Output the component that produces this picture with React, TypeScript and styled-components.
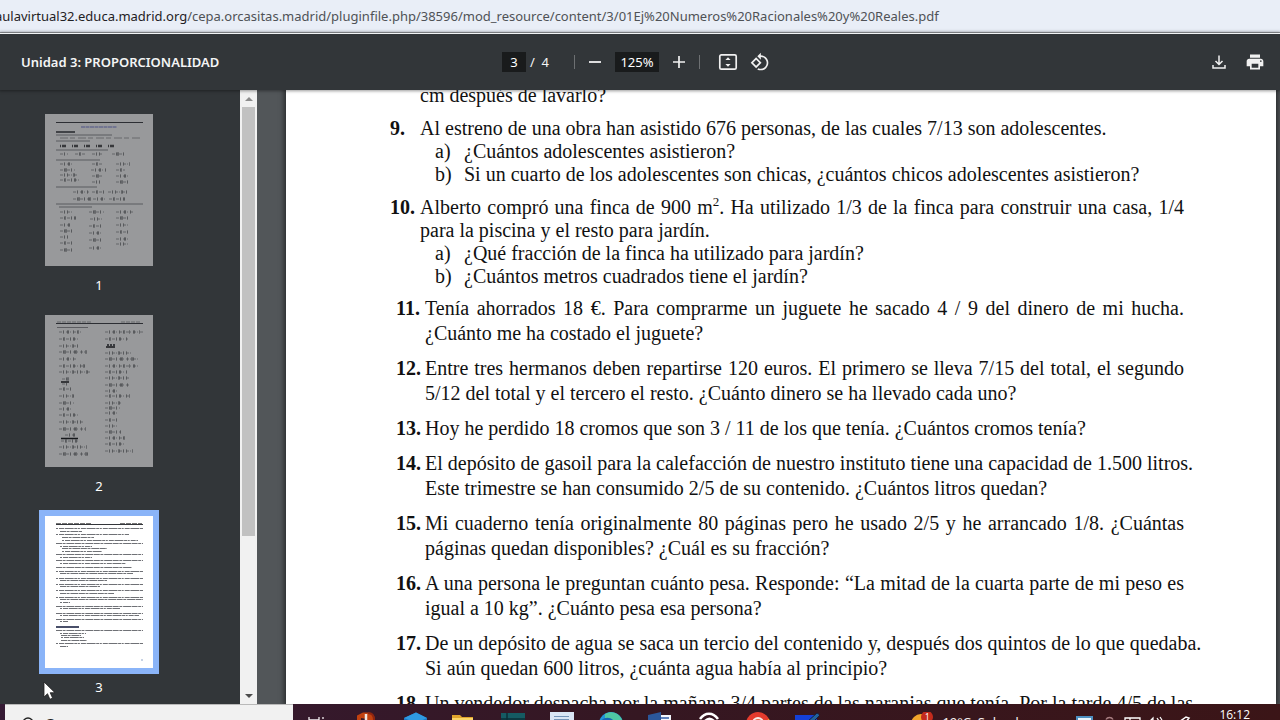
import React from "react";
import styled, { createGlobalStyle } from "styled-components";

const GlobalStyle = createGlobalStyle`
  *, *::before, *::after { box-sizing: border-box; }
  html, body, #root { height: 100%; margin: 0; }
  body {
    font-family: "Noto Sans", "Open Sans", sans-serif;
    overflow: hidden;
  }
  button, input { font: inherit; color: inherit; }
`;

const Screen = styled.div`
  display: grid;
  grid-template-rows: auto auto minmax(0, 1fr) 16px;
  height: 100vh;
  overflow: hidden;
`;

/* ---------- address bar ---------- */

const AddressBar = styled.div`
  display: flex;
  align-items: center;
  height: 33px;
  background: #e9eef7;
  border-bottom: 1px solid #a3a7ab;
  overflow: hidden;
`;

const Url = styled.div`
  margin-left: -5px;
  font-size: 13px;
  line-height: 20px;
  white-space: nowrap;
  color: #4f5256;
`;

const Host = styled.span`
  color: #1f2124;
`;

/* ---------- viewer toolbar ---------- */

const Toolbar = styled.header`
  position: relative;
  z-index: 2;
  display: grid;
  grid-template-columns: 1fr auto 1fr;
  align-items: center;
  height: 57px;
  padding: 0 15px 0 21px;
  background: #323639;
  color: #f4f5f5;
  font-size: 13px;
  border-top: 1px solid #f2f4f6;
  box-shadow: 0 0 3px 1px rgba(0, 0, 0, 0.4);
`;

const Title = styled.h1`
  margin: 0;
  font-size: 13px;
  font-weight: 600;
  white-space: nowrap;
`;

const Controls = styled.div`
  display: flex;
  align-items: center;
  padding-right: 8px;
`;

const ToolInput = styled.input<{ $width: number }>`
  width: ${(p) => p.$width}px;
  height: 20px;
  padding: 0;
  border: 0;
  background: #191b1c;
  color: #fff;
  text-align: center;
`;

const PageTotal = styled.span`
  width: 48px;
  padding-left: 4px;
  white-space: pre;
`;

const Divider = styled.span`
  width: 1px;
  height: 14px;
  background: #6d7072;
`;

const IconButton = styled.button`
  display: grid;
  place-items: center;
  width: 32px;
  height: 32px;
  padding: 0;
  border: 0;
  background: none;
  color: #f1f1f1;
`;

const ZoomGroup = styled.div`
  display: flex;
  align-items: center;
  gap: 4px;
  padding: 0 4px;
`;

const FitGroup = styled.div`
  display: flex;
  padding-left: 12px;
`;

const Actions = styled.div`
  display: flex;
  justify-content: flex-end;
  gap: 16px;

  ${IconButton} { width: 20px; }
`;

/* ---------- main area ---------- */

const Main = styled.main`
  display: grid;
  grid-template-columns: 240px 17px minmax(0, 1fr);
  min-height: 0;
  background: #525659;
`;

const Sidebar = styled.nav`
  display: flex;
  flex-direction: column;
  align-items: center;
  gap: 22px;
  padding: 24px 42px 0 0;
  overflow: hidden;
  background: #323639;
`;

const ThumbItem = styled.button`
  display: flex;
  flex-direction: column;
  align-items: center;
  gap: 11px;
  flex: none;
  padding: 0;
  border: 0;
  background: none;
  color: #fff;
  font-size: 13px;
  line-height: 16px;
`;

const ThumbPage = styled.span<{ $active?: boolean }>`
  display: block;
  width: 108px;
  height: 152px;
  background: ${(p) => (p.$active ? "#fff" : "#98999b")};
  box-shadow: ${(p) => (p.$active ? "0 0 0 6px #8ab4f8" : "none")};

  svg { display: block; }
`;

const Scrollbar = styled.div`
  display: flex;
  flex-direction: column;
  align-items: center;
  background: #f1f1f1;
`;

const ScrollArrow = styled.span`
  display: grid;
  place-items: center;
  flex: none;
  width: 17px;
  height: 17px;
`;

const ScrollTrack = styled.div`
  flex: 1;
  width: 13px;
`;

const ScrollThumb = styled.div`
  height: 74%;
  background: #c1c1c1;
`;

const Viewer = styled.section`
  padding: 0 4px 0 29px;
  overflow: hidden;
  min-height: 0;
`;

const Paper = styled.article`
  height: 100%;
  padding: 0 92px 0 104px;
  background: #fff;
  box-shadow: 0 0 5px 2px rgba(0, 0, 0, 0.5);
  color: #111;
  font-family: "Liberation Serif", "Times New Roman", serif;
  font-size: 20px;
  overflow: hidden;
`;

const Sheet = styled.div`
  margin-top: -6px;
`;

const Exercises = styled.div<{ $loose?: boolean }>`
  display: grid;
  gap: 10px;
  margin-top: ${(p) => (p.$loose ? 8 : 0)}px;
  padding-left: ${(p) => (p.$loose ? 6 : 0)}px;
  line-height: ${(p) => (p.$loose ? 25 : 23)}px;
`;

const Exercise = styled.div<{ $loose?: boolean }>`
  display: grid;
  grid-template-columns: ${(p) => (p.$loose ? 29 : 30)}px minmax(0, 1fr);
`;

const Num = styled.b`
  white-space: nowrap;
`;

const Statement = styled.p`
  margin: 0;
`;

/* The document is already typeset: every line but the last fills the measure. */
const Line = styled.span`
  display: block;
  white-space: nowrap;

  &:not(:last-child) { text-align-last: justify; }

  sup {
    font-size: 13px;
    line-height: 0;
  }
`;

const Question = styled.div`
  display: grid;
  grid-template-columns: 29px minmax(0, 1fr);
  padding-left: 15px;
  white-space: nowrap;
`;

/* ---------- task bar ---------- */

const Taskbar = styled.footer`
  position: relative;
  z-index: 3;
  display: flex;
  align-items: flex-start;
  height: 16px;
  padding-left: 5px;
  overflow: hidden;
  background: linear-gradient(90deg, #351a34, #351722 50%, #3b1517);
  color: #f5eeee;
`;

const SearchBox = styled.label`
  display: flex;
  align-items: center;
  flex: none;
  gap: 9px;
  width: 288px;
  height: 40px;
  padding-left: 16px;
  border-top: 1px solid #b9b9b9;
  background: #f1f1f1;
  color: #222;
`;

const SearchInput = styled.input`
  width: 200px;
  height: 24px;
  padding: 0;
  border: 0;
  background: none;
  font-size: 16px;
`;

const Apps = styled.div`
  display: flex;
  gap: 1px;
`;

const AppButton = styled.button`
  display: grid;
  place-items: center;
  width: 48px;
  height: 40px;
  padding: 0;
  border: 0;
  background: none;
`;

const Tray = styled.div`
  display: flex;
  align-items: center;
  height: 40px;
  margin-left: auto;
  padding-right: 30px;
`;

const Weather = styled.div`
  display: flex;
  align-items: center;
  gap: 8px;
  width: 163px;
  font-size: 13px;
  line-height: 20px;
  white-space: pre;
`;

const Forecast = styled.span`
  padding-bottom: 4px;
`;

const TrayIcons = styled.div`
  display: flex;
  width: 146px;
`;

const Clock = styled.time`
  align-self: flex-start;
  padding-top: 2px;
  font-family: "Open Sans", "Noto Sans", sans-serif;
  font-size: 12px;
  line-height: 17px;
  color: #fff;
`;

const Pointer = styled.svg`
  position: fixed;
  left: 43px;
  bottom: 19px;
  z-index: 4;
`;

/* ---------- thumbnails ---------- */

type Stroke = [x: number, y: number, width: number];

const rulesOne: Stroke[] = [
  [11, 21, 56], [11, 27, 34], [11, 36, 52], [11, 46, 44],
  [11, 73, 41], [11, 90, 87], [14, 93, 33],
];
const formulasOne: Stroke[] = [
  [15, 40, 8], [30, 40, 10], [47, 40, 11], [67, 40, 14],
  [15, 50, 12], [47, 50, 10], [71, 50, 14], [15, 56, 15], [46, 56, 15], [71, 56, 9],
  [15, 61, 17], [47, 62, 11], [71, 62, 12], [15, 66, 20], [47, 68, 8], [71, 68, 12],
  [28, 78, 16], [47, 78, 14], [63, 78, 20], [28, 85, 18], [48, 85, 14], [64, 85, 16],
  [15, 98, 12], [44, 98, 15], [71, 98, 18], [15, 104, 16], [45, 105, 12], [71, 104, 12],
  [15, 111, 11], [44, 112, 12], [71, 111, 13], [15, 117, 13], [44, 119, 13],
  [71, 118, 12], [15, 123, 8], [44, 126, 14], [71, 125, 12], [15, 129, 14],
  [71, 130, 12], [15, 136, 12], [44, 134, 12],
];
const formulasTwo: Stroke[] = [
  [14, 17, 22], [14, 24, 20], [14, 31, 20], [14, 37, 28], [14, 44, 17], [14, 51, 26],
  [14, 57, 32], [17, 64, 7], [17, 69, 7], [14, 74, 13], [14, 81, 15], [14, 88, 15],
  [14, 94, 13], [14, 100, 20], [14, 107, 24], [14, 114, 27], [20, 120, 10],
  [16, 126, 17], [14, 132, 28], [14, 139, 29],
  [60, 17, 38], [60, 24, 23], [60, 38, 26], [60, 44, 33], [60, 51, 33], [60, 57, 22],
  [60, 63, 25], [60, 70, 25], [60, 76, 14], [60, 81, 25], [60, 88, 16], [60, 93, 15],
  [60, 98, 14], [60, 105, 14], [60, 111, 13], [60, 117, 16], [60, 123, 21],
  [60, 129, 21], [60, 136, 28],
];
const textThree: Stroke[] = [
  [11, 12, 87], [15, 15, 22], [11, 18, 73], [17, 21, 32], [17, 24, 76],
  [11, 27, 87], [15, 30, 32], [17, 32, 45], [17, 35, 40], [11, 38, 87], [15, 41, 32],
  [11, 44, 87], [15, 47, 66], [11, 51, 76], [11, 55, 87], [15, 57, 73], [11, 62, 87],
  [15, 64, 47], [11, 68, 87], [15, 70, 40], [11, 74, 87], [15, 77, 54], [11, 81, 87],
  [15, 83, 83], [15, 86, 10], [11, 90, 87], [15, 92, 60], [11, 97, 87], [15, 99, 79],
  [11, 103, 87], [15, 105, 8], [11, 114, 87], [15, 117, 26], [16, 119, 20],
  [16, 121, 23], [16, 124, 26], [11, 127, 87], [15, 130, 8],
];

const dashes = ["1 3 2 4", "2 5 1 2", "1 2 1 5 2 3", "3 4 1 3"];

const Formulas = ({ rows }: { rows: Stroke[] }) => (
  <g stroke="#34363a">
    {rows.map(([x, y, w], i) => (
      <g key={`${x}-${y}`}>
        <path d={`M${x} ${y}h${w}`} strokeWidth="1" strokeDasharray="3 1 1 2" opacity=".5" />
        <path
          d={`M${x + 4} ${y}h${w - 4}`}
          strokeWidth="3.400"
          strokeDasharray={dashes[i % dashes.length]}
          opacity=".5"
        />
      </g>
    ))}
  </g>
);

const ThumbOne = () => (
  <svg width="108" height="152" viewBox="0 0 108 152" aria-hidden="true">
    <path d="M11 8.500h87" stroke="#2c2e33" />
    <g stroke="#4a4c50" strokeWidth=".8">
      {rulesOne.map(([x, y, w]) => <path key={y} d={`M${x} ${y}h${w}`} />)}
    </g>
    <path d="M11 18h19" stroke="#25272b" strokeWidth="1.500" />
    <path d="M36 13h36" stroke="#4d5385" strokeWidth="1.200" strokeDasharray="4 .5" />
    <path d="M15 24h80" stroke="#55575a" strokeDasharray="8 2 5 3" opacity=".7" />
    <path d="M15 32h56" stroke="#1f2124" strokeWidth="2.500" strokeDasharray="1 1 4 6" opacity=".8" />
    <Formulas rows={formulasOne} />
  </svg>
);

const ThumbTwo = () => (
  <svg width="108" height="152" viewBox="0 0 108 152" aria-hidden="true">
    <path d="M11 8.500h87" stroke="#2c2e33" />
    <path d="M12 7h34M76 7h20" stroke="#393b3f" strokeDasharray="4 1" opacity=".5" />
    <path d="M12 12.500h31" stroke="#4c4e52" strokeWidth=".8" />
    <path d="M16 67h8M16 123.500h17M61 32h9" stroke="#17191c" strokeWidth="1.300" />
    <path d="M62 30h8" stroke="#393b3f" strokeWidth="2" strokeDasharray="2 1" />
    <Formulas rows={formulasTwo} />
  </svg>
);

const ThumbThree = () => (
  <svg width="108" height="152" viewBox="0 0 108 152" aria-hidden="true">
    <path d="M11 8.500h87" stroke="#33353a" />
    <path d="M11 7.500h36M75 7.500h22" stroke="#777" strokeDasharray="5 1" />
    <g stroke="#4c4e54" strokeWidth="1" opacity=".8">
      {textThree.map(([x, y, w], i) => (
        <path
          key={y}
          d={`M${x} ${y + 0.5}h${w}`}
          strokeDasharray={i % 2 ? "6 .6 3 .8 8 .5" : "2 1 5 .7 9 .6 3 .6"}
        />
      ))}
    </g>
    <path d="M11 111h23" stroke="#1c2344" strokeWidth="1.600" />
    <path d="M96 144h2" stroke="#8fa5c8" />
  </svg>
);

const thumbnails = [ThumbOne, ThumbTwo, ThumbThree];

/* ---------- document text ---------- */

type Item = { n: string; lines: React.ReactNode[]; questions?: string[] };

const tightItems: Item[] = [
  { n: "", lines: ["cm después de lavarlo?"] },
  {
    n: "9.",
    lines: ["Al estreno de una obra han asistido 676 personas, de las cuales 7/13 son adolescentes."],
    questions: [
      "¿Cuántos adolescentes asistieron?",
      "Si un cuarto de los adolescentes son chicas, ¿cuántos chicos adolescentes asistieron?",
    ],
  },
  {
    n: "10.",
    lines: [
      <>
        Alberto compró una finca de 900 m<sup>2</sup>. Ha utilizado 1/3 de la finca para
        construir una casa, 1/4
      </>,
      "para la piscina y el resto para jardín.",
    ],
    questions: [
      "¿Qué fracción de la finca ha utilizado para jardín?",
      "¿Cuántos metros cuadrados tiene el jardín?",
    ],
  },
];

const looseItems: Item[] = [
  {
    n: "11.",
    lines: [
      "Tenía ahorrados 18 €. Para comprarme un juguete he sacado 4 / 9 del dinero de mi hucha.",
      "¿Cuánto me ha costado el juguete?",
    ],
  },
  {
    n: "12.",
    lines: [
      "Entre tres hermanos deben repartirse 120 euros. El primero se lleva 7/15 del total, el segundo",
      "5/12 del total y el tercero el resto. ¿Cuánto dinero se ha llevado cada uno?",
    ],
  },
  {
    n: "13.",
    lines: ["Hoy he perdido 18 cromos que son 3 / 11 de los que tenía. ¿Cuántos cromos tenía?"],
  },
  {
    n: "14.",
    lines: [
      "El depósito de gasoil para la calefacción de nuestro instituto tiene una capacidad de 1.500 litros.",
      "Este trimestre se han consumido 2/5 de su contenido. ¿Cuántos litros quedan?",
    ],
  },
  {
    n: "15.",
    lines: [
      "Mi cuaderno tenía originalmente 80 páginas pero he usado 2/5 y he arrancado 1/8. ¿Cuántas",
      "páginas quedan disponibles? ¿Cuál es su fracción?",
    ],
  },
  {
    n: "16.",
    lines: [
      "A una persona le preguntan cuánto pesa. Responde: “La mitad de la cuarta parte de mi peso es",
      "igual a 10 kg”. ¿Cuánto pesa esa persona?",
    ],
  },
  {
    n: "17.",
    lines: [
      "De un depósito de agua se saca un tercio del contenido y, después dos quintos de lo que quedaba.",
      "Si aún quedan 600 litros, ¿cuánta agua había al principio?",
    ],
  },
  {
    n: "18.",
    lines: ["Un vendedor despacha por la mañana 3/4 partes de las naranjas que tenía. Por la tarde 4/5 de las"],
  },
];

const ExerciseList = ({ items, loose }: { items: Item[]; loose?: boolean }) => (
  <Exercises $loose={loose}>
    {items.map((item) => (
      <Exercise key={item.n} $loose={loose}>
        <Num>{item.n}</Num>
        <div>
          <Statement>
            {item.lines.map((line, i) => <Line key={i}>{line}</Line>)}
          </Statement>
          {item.questions?.map((q, i) => (
            <Question key={q}>
              <span>{"ab"[i]})</span>
              <span>{q}</span>
            </Question>
          ))}
        </div>
      </Exercise>
    ))}
  </Exercises>
);

/* ---------- task bar icons ---------- */

const apps: { name: string; art: React.ReactNode }[] = [
  { name: "Vista de tareas", art: <path d="M4 5v3h10V5M18 5v2M18 8v3" fill="none" stroke="#f4eef2" strokeWidth="1.300" /> },
  {
    name: "Office",
    art: (
      <>
        <path d="M3 3.500 9 .5h4c5 0 8 3 8 8V20h-8V7L7 6v5L3 9z" fill="#c2410f" />
        <path d="M12 2v16" stroke="#f3e6df" strokeWidth="2.500" />
        <path d="M14 1c4 0 6 3 6 7" fill="none" stroke="#8f2510" strokeWidth="2" />
      </>
    ),
  },
  {
    name: "Paquetes",
    art: (
      <>
        <path d="M13 .5 24 6v12l-11 6L1 18V6z" fill="#1b78c4" />
        <path d="M13 .5 24 6l-11 5L1 6z" fill="#2f9ae2" />
      </>
    ),
  },
  {
    name: "Explorador de archivos",
    art: (
      <>
        <path d="M0 3h8l2 2h11v16H0z" fill="#e0a32c" />
        <path d="M0 6h21v15H0z" fill="#fbd567" />
      </>
    ),
  },
  {
    name: "Terminal",
    art: (
      <>
        <path d="M0 1h24v22H0z" fill="#155b63" />
        <path d="M6 1v22M0 7h24" stroke="#0b2f37" strokeWidth="1.500" />
      </>
    ),
  },
  {
    name: "Bloc de notas",
    art: (
      <>
        <path d="M0 0h24v24H0z" fill="#d9e6f5" />
        <path d="M4 4.500h15M4 7.500h15" stroke="#7394b8" />
      </>
    ),
  },
  {
    name: "Edge",
    art: (
      <>
        <circle cx="12" cy="12" r="12" fill="#2195d8" />
        <path d="M6 2C14-3 24 3 24 13H13c2-4-2-7-7-5z" fill="#4fc7a3" />
        <path d="M1 11c2-6 10-7 14-2-6-1-9 3-9 8z" fill="#1665b4" />
      </>
    ),
  },
  {
    name: "Word",
    art: (
      <>
        <path d="M10 3h13v18H10z" fill="#f4f7fc" />
        <path d="M13 6h8M13 9h8" stroke="#315ca5" strokeWidth="1.500" />
        <path d="M0 3 13 0v24L0 21z" fill="#2b579a" />
      </>
    ),
  },
  {
    name: "Conexión",
    art: <path d="M3 7c5-7 13-7 18 0M8 9c3-3 6-3 9 0" fill="none" stroke="#fff" strokeWidth="2.500" />,
  },
  {
    name: "Chrome",
    art: (
      <>
        <circle cx="12" cy="12" r="12" fill="#e43b2d" />
        <path d="M15 12 23 7a12 12 0 0 1-10 17z" fill="#f8c327" />
        <circle cx="12" cy="11" r="6" fill="#f7ede9" />
        <circle cx="12" cy="11" r="4" fill="#e66a4b" />
      </>
    ),
  },
  {
    name: "Pizarra",
    art: (
      <>
        <path d="M0 3h22v18H0z" fill="#1440d8" />
        <path d="M12 10 22 1l3 2-9 9z" fill="#23629b" stroke="#10213f" />
      </>
    ),
  },
];

const trayIcons: { name: string; art: React.ReactNode }[] = [
  { name: "Pantalla", art: <path d="M4 5h15v14H4z" fill="#eaf4fb" stroke="#4d8fc0" strokeWidth="2" /> },
  { name: "Estado", art: <path d="M9 7.500a4 4 0 0 1 7 0" fill="none" stroke="#a77d80" strokeWidth="1.500" /> },
  { name: "Teclado", art: <path d="M4 6h15v10H4zM9 6v10" fill="none" stroke="#fff" strokeWidth="1.300" /> },
  { name: "Volumen", art: <path d="M5 9l3-3v11M12 6l2 3M15 5l2 3" fill="none" stroke="#fff" strokeWidth="1.200" /> },
  { name: "Lápiz", art: <path d="M10 10 17 5l3 1-4 5" fill="none" stroke="#fff" strokeWidth="1.500" /> },
];

const App = () => (
  <>
    <GlobalStyle />
    <Screen>
      <AddressBar>
        <Url>
          <Host>aulavirtual32.educa.madrid.org</Host>
          /cepa.orcasitas.madrid/pluginfile.php/38596/mod_resource/content/3/01Ej%20Numeros%20Racionales%20y%20Reales.pdf
        </Url>
      </AddressBar>

      <Toolbar>
        <Title>Unidad 3: PROPORCIONALIDAD</Title>
        <Controls>
          <ToolInput $width={24} aria-label="Página" defaultValue="3" />
          <PageTotal>{"/  4"}</PageTotal>
          <Divider />
          <ZoomGroup>
            <IconButton aria-label="Reducir">
              <svg width="20" height="20" viewBox="0 0 20 20"><path d="M4 10h12" stroke="currentColor" strokeWidth="1.800" /></svg>
            </IconButton>
            <ToolInput $width={44} aria-label="Zoom" defaultValue="125%" />
            <IconButton aria-label="Ampliar">
              <svg width="20" height="20" viewBox="0 0 20 20"><path d="M4 10h12M10 4v12" stroke="currentColor" strokeWidth="1.700" /></svg>
            </IconButton>
          </ZoomGroup>
          <Divider />
          <FitGroup>
            <IconButton aria-label="Ajustar a la página">
              <svg width="20" height="20" viewBox="0 0 20 20">
                <rect x="1.800" y="2.800" width="16.400" height="14.400" rx="1.500" fill="none" stroke="currentColor" strokeWidth="1.700" />
                <path d="M10 5.200 12.600 8H7.400zM10 14.800 7.400 12h5.200z" fill="currentColor" />
              </svg>
            </IconButton>
            <IconButton aria-label="Girar">
              <svg width="20" height="20" viewBox="0 0 24 24" fill="currentColor">
                <path d="M7.340 6.410.86 12.900l6.490 6.480 6.490-6.480-6.500-6.490zM3.690 12.900l3.660-3.660L11 12.900l-3.660 3.660-3.650-3.660zm15.670-6.260C17.610 4.880 15.300 4 13 4V.76L8.760 5 13 9.240V6c1.790 0 3.580.68 4.950 2.050 2.730 2.730 2.730 7.170 0 9.900C16.580 19.320 14.790 20 13 20c-.97 0-1.940-.21-2.840-.61l-1.490 1.490C10.020 21.620 11.510 22 13 22c2.300 0 4.610-.88 6.360-2.640 3.520-3.510 3.520-9.210 0-12.720z" />
              </svg>
            </IconButton>
          </FitGroup>
        </Controls>
        <Actions>
          <IconButton aria-label="Descargar">
            <svg width="20" height="20" viewBox="0 0 20 20" fill="none" stroke="currentColor" strokeWidth="1.500">
              <path d="M10 3.500v9M6.500 9l3.500 3.500L13.500 9M4 13v3h12v-3" />
            </svg>
          </IconButton>
          <IconButton aria-label="Imprimir">
            <svg width="20" height="20" viewBox="0 0 24 24" fill="currentColor">
              <path d="M19 8H5c-1.660 0-3 1.340-3 3v6h4v4h12v-4h4v-6c0-1.660-1.340-3-3-3zm-3 11H8v-5h8v5zm3-7c-.55 0-1-.45-1-1s.45-1 1-1 1 .45 1 1-.45 1-1 1zm-1-9H6v4h12V3z" />
            </svg>
          </IconButton>
        </Actions>
      </Toolbar>

      <Main>
        <Sidebar aria-label="Miniaturas">
          {thumbnails.map((Thumb, i) => (
            <ThumbItem key={i}>
              <ThumbPage $active={i === 2}><Thumb /></ThumbPage>
              <span>{i + 1}</span>
            </ThumbItem>
          ))}
        </Sidebar>
        <Scrollbar>
          <ScrollArrow>
            <svg width="8" height="4" viewBox="0 0 8 4"><path d="M0 4 4 0l4 4z" fill="#8c8c8c" /></svg>
          </ScrollArrow>
          <ScrollTrack><ScrollThumb /></ScrollTrack>
          <ScrollArrow>
            <svg width="8" height="4" viewBox="0 0 8 4"><path d="M0 0h8L4 4z" fill="#4c4c4c" /></svg>
          </ScrollArrow>
        </Scrollbar>
        <Viewer>
          <Paper>
            <Sheet>
              <ExerciseList items={tightItems} />
              <ExerciseList items={looseItems} loose />
            </Sheet>
          </Paper>
        </Viewer>
      </Main>

      <Taskbar>
        <SearchBox>
          <svg width="14" height="16" viewBox="0 0 14 16" fill="none" stroke="#222" strokeWidth="1.400" aria-hidden="true">
            <circle cx="7" cy="6" r="5" />
            <path d="m4 10-3 5" />
          </svg>
          <SearchInput aria-label="Buscar" defaultValue="C" />
        </SearchBox>
        <Apps>
          {apps.map((app) => (
            <AppButton key={app.name} aria-label={app.name}>
              <svg width="24" height="24" viewBox="0 0 24 24">{app.art}</svg>
            </AppButton>
          ))}
        </Apps>
        <Tray>
          <Weather>
            <svg width="24" height="24" viewBox="0 0 24 24">
              <circle cx="11" cy="12" r="10" fill="#f2a52b" />
              <circle cx="17" cy="5" r="6" fill="#c42b1c" />
              <text x="15" y="8" fontSize="8" fill="#fff">1</text>
            </svg>
            <Forecast>19°C  Soleado</Forecast>
          </Weather>
          <TrayIcons>
            {trayIcons.map((icon) => (
              <svg key={icon.name} width="24" height="24" viewBox="0 0 24 24" aria-label={icon.name}>{icon.art}</svg>
            ))}
          </TrayIcons>
          <Clock>16:12</Clock>
        </Tray>
      </Taskbar>
    </Screen>
    <Pointer width="14" height="20" viewBox="0 0 14 20" aria-hidden="true">
      <path d="M1 1v15l3.500-3.300 2.400 5.600 2.700-1.200-2.400-5.400H12z" fill="#fff" stroke="#222" strokeWidth=".8" />
    </Pointer>
  </>
);

export default App;
